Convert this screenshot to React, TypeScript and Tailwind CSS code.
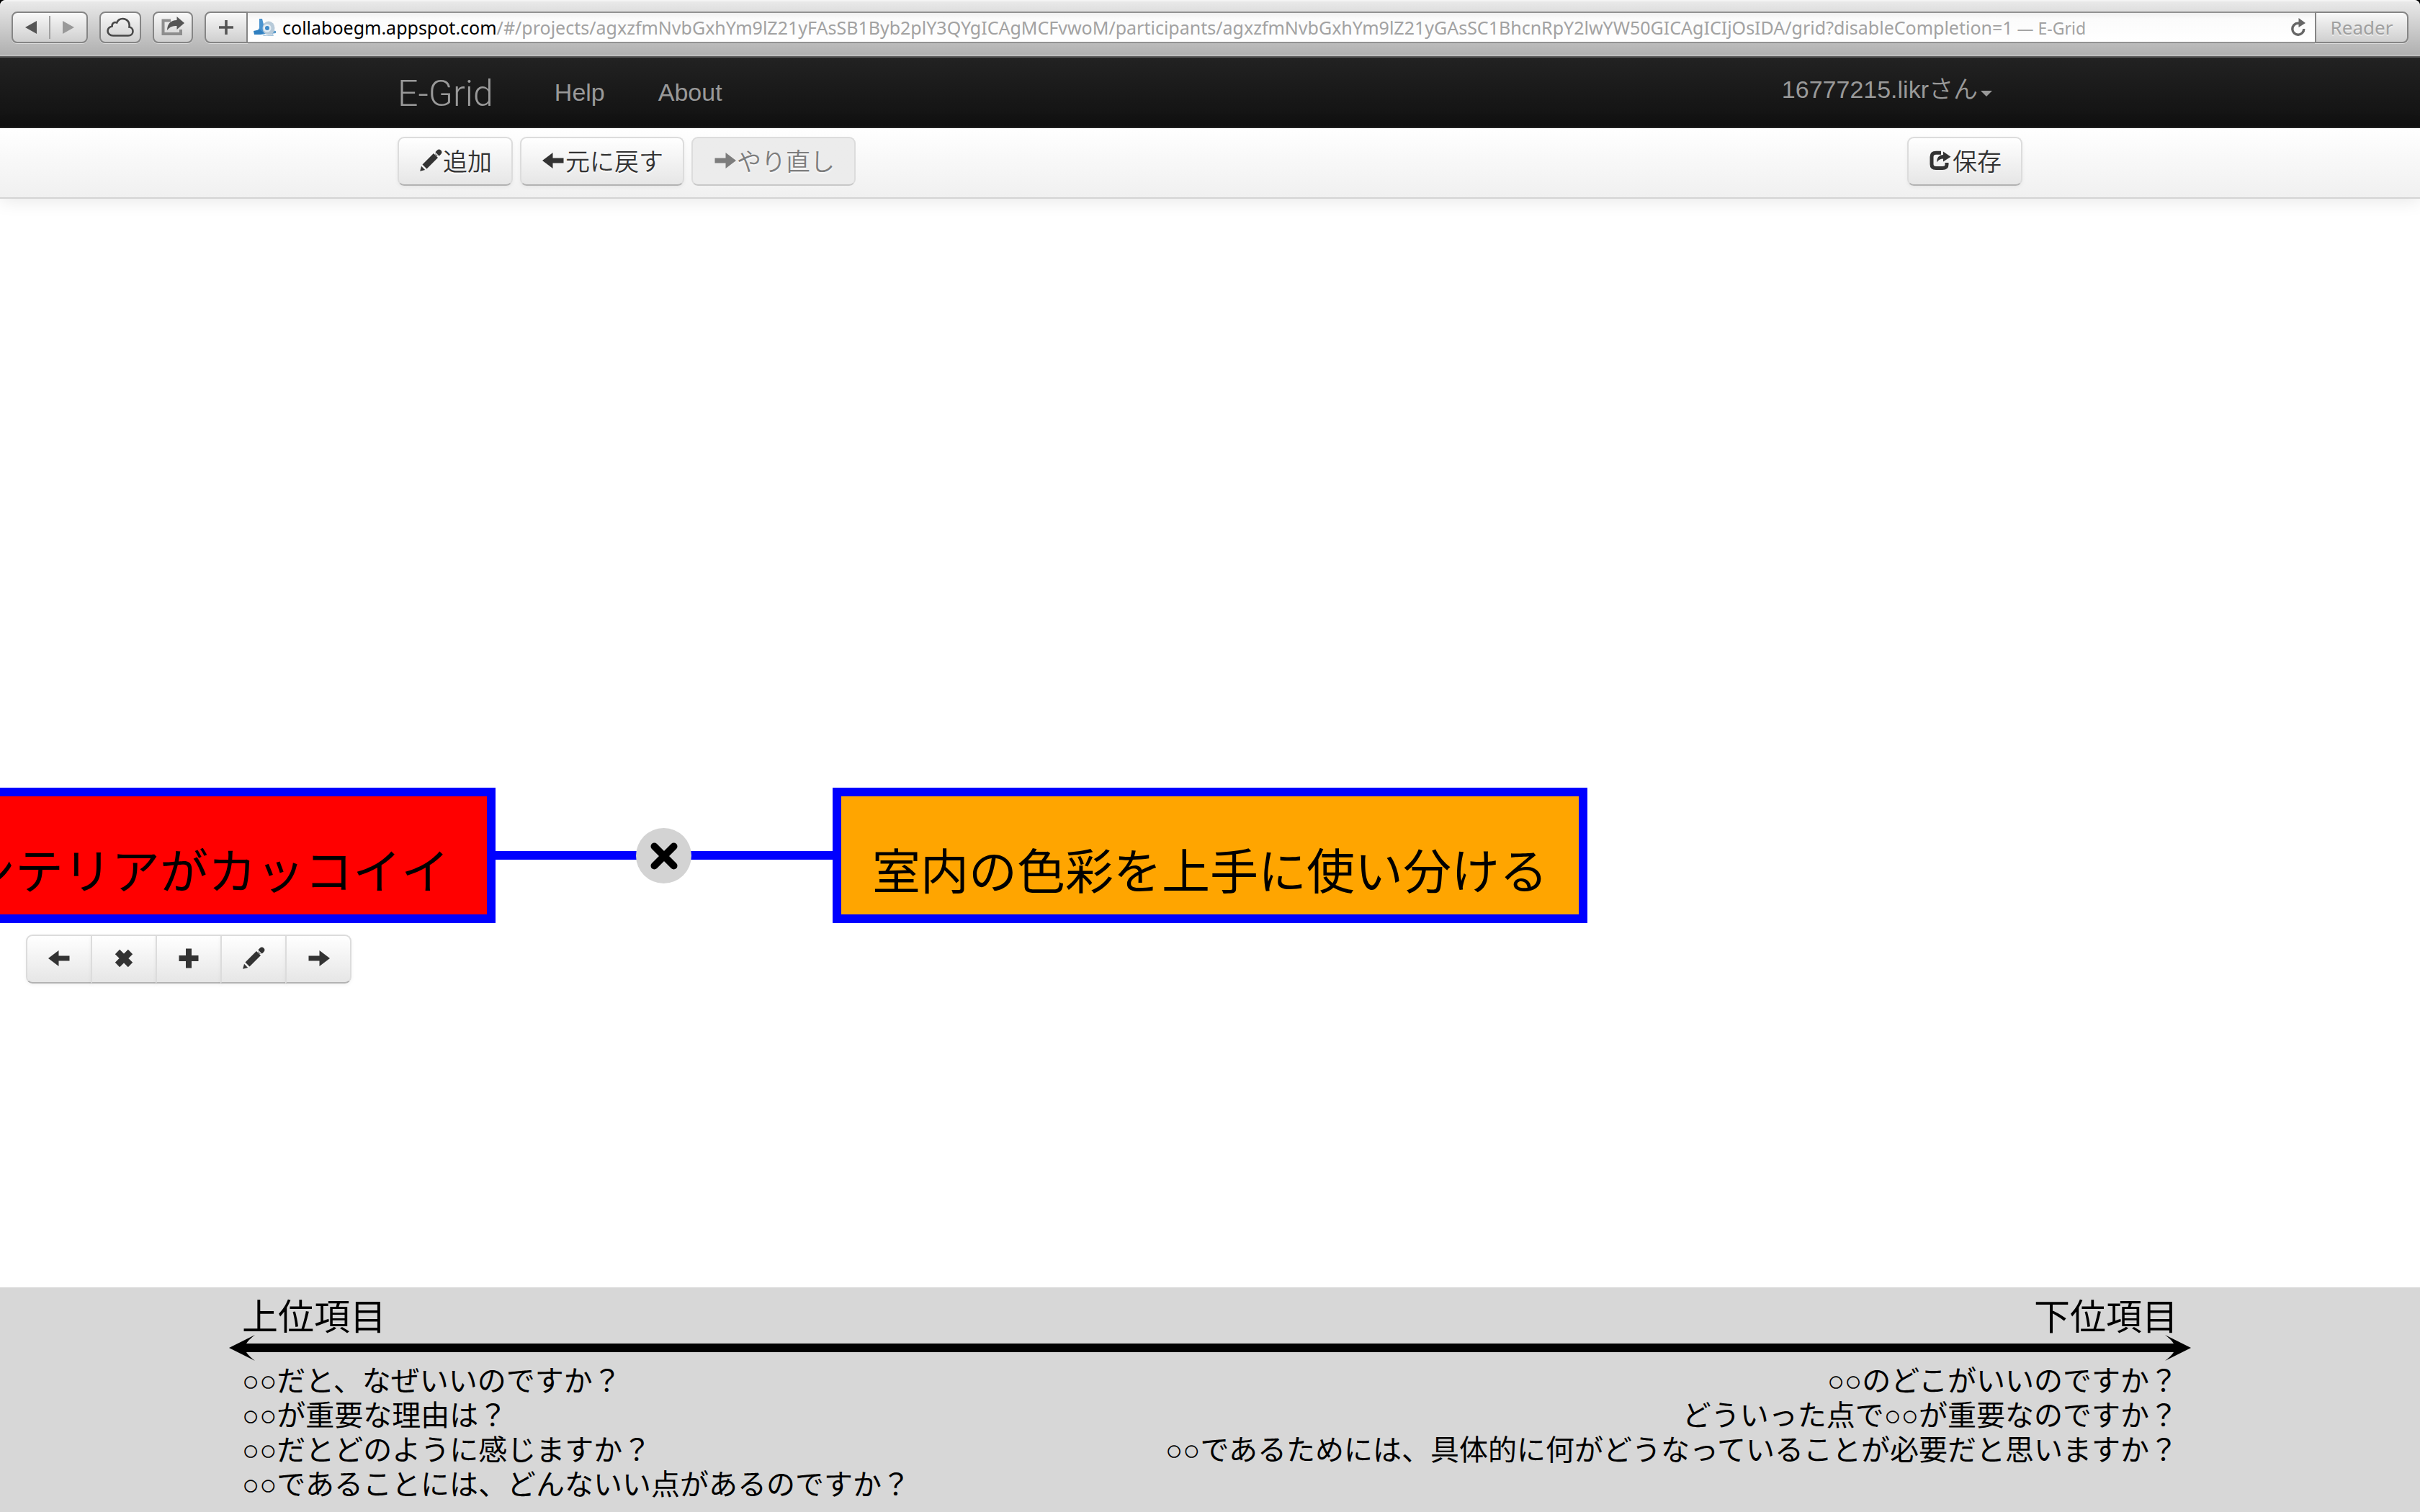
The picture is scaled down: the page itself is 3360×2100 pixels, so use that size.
import type { ReactNode } from "react";

const JP = "font-['Noto_Sans_CJK_JP',sans-serif]";
const LATIN_JP = "font-['Liberation_Sans','Noto_Sans_CJK_JP',sans-serif]";
const UI = "font-['Noto_Sans',sans-serif]";

function Icon({ children }: { children: ReactNode }) {
  return (
    <svg viewBox="0 0 34 34" className="size-[34px] shrink-0" fill="currentColor" aria-hidden="true">
      {children}
    </svg>
  );
}

const ArrowLeft = () => (
  <Icon>
    <path d="M2 17 16.500 6v7.500h15v7h-15V28z" />
  </Icon>
);

const ArrowRight = () => (
  <Icon>
    <path d="M33 17 18.500 6v7.500h-15v7h15V28z" />
  </Icon>
);

const Cross = () => (
  <Icon>
    <path d="M8 8 26 26M26 8 8 26" stroke="currentColor" strokeWidth="9" />
  </Icon>
);

const Plus = () => (
  <Icon>
    <path d="M13 3.500h8V13h9.500v8H21v9.500h-8V21H3.500v-8H13z" />
  </Icon>
);

const Pencil = () => (
  <Icon>
    <path d="M2.200 31.800 4 24.800 9.200 30z" />
    <path d="M8.500 25.500 24 10" stroke="currentColor" strokeWidth="8.500" />
    <path d="M27 7 28.500 5.500" stroke="currentColor" strokeWidth="7.500" strokeLinecap="round" />
    <path d="M22.500 5.500 28.500 11.500" stroke="#f4f4f4" strokeWidth="1.500" />
  </Icon>
);

const Share = () => (
  <Icon>
    <path
      d="M18 6.200H11Q5 6.200 5 12V22Q5 27.500 11 27.500H20Q26 27.500 26 22.500V20"
      fill="none"
      stroke="currentColor"
      strokeWidth="5"
    />
    <path d="M12 19.500Q12 9.500 21 9V4.500L31.500 11.800 21 18.500V14.500Q15.500 14.500 12 19.500z" />
  </Icon>
);

function ToolButton({ icon, children, disabled }: { icon: ReactNode; children: ReactNode; disabled?: boolean }) {
  return (
    <button
      type="button"
      disabled={disabled}
      className={`${JP} flex h-[68px] items-center rounded-[9px] border-2 border-[#dcdcdc] border-b-[#b3b3b3] bg-linear-to-b from-white to-[#e6e6e6] px-[27px] pb-0.5 text-[34px] leading-[48px] font-[350] text-[#333] shadow-[0_2px_5px_rgba(0,0,0,0.05)] [text-shadow:0_2px_2px_rgba(255,255,255,0.75)] disabled:border-b-[#c8c8c8] disabled:from-[#ececec] disabled:to-[#ececec] disabled:text-[#7d7d7d] disabled:shadow-none`}
    >
      {icon}
      {children}
    </button>
  );
}

const chrome =
  "flex h-11 items-center justify-center border-2 border-[#858585] bg-linear-to-b from-[#f8f8f8] to-[#cfcfcf] shadow-[0_1px_0_rgba(255,255,255,0.5)]";

function BrowserBar() {
  return (
    <div className="bg-black">
      <div className="flex h-20 items-start gap-4 rounded-t-[8px] border-b-2 border-[#5c5c5c] bg-linear-to-b from-[#ebebeb] to-[#aeaeae] px-4 pt-4 shadow-[inset_0_2px_0_#f4f4f4,inset_0_-2px_0_#bdbdbd]">
        <div className={`${chrome} w-[106px] rounded-[8px]`}>
          <button type="button" aria-label="Back" className="flex flex-1 justify-center">
            <svg viewBox="0 0 18 18" className="size-[18px] text-[#555]">
              <path d="M17 0v18L1 9z" fill="currentColor" />
            </svg>
          </button>
          <span className="h-8 w-0.5 bg-[#a0a0a0]" />
          <button type="button" aria-label="Forward" className="flex flex-1 justify-center">
            <svg viewBox="0 0 18 18" className="size-[18px] text-[#999]">
              <path d="M1 0v18l16-9z" fill="currentColor" />
            </svg>
          </button>
        </div>
        <button type="button" aria-label="iCloud Tabs" className={`${chrome} w-[58px] rounded-[8px]`}>
          <svg viewBox="0 0 38 28" className="h-7 w-[38px]" fill="none" stroke="#484848" strokeWidth="2.600">
            <path d="M9 25.500H30C34 25.500 36.500 22.800 36.500 19.500C36.500 16 34 13.800 31.500 13.500C32.500 6.500 28 2 22.500 2C18.500 2 15.500 4.200 14.200 7.500C10.500 6 7.200 8.500 7.600 12.500C4 13.500 1.500 16 1.500 19C1.500 22.500 4.500 25.500 9 25.500z" />
          </svg>
        </button>
        <button type="button" aria-label="Share" className={`${chrome} w-14 rounded-[8px]`}>
          <svg viewBox="0 0 34 28" className="mb-1 h-7 w-[34px]">
            <path d="M14 6.500H3.500V25H28V19" fill="none" stroke="#8e8e8e" strokeWidth="4" />
            <path d="M9 20Q9.500 6.500 22.500 6V1L33 10 22.500 19V14Q14 13 9 20z" fill="#555" />
          </svg>
        </button>
        <div className="flex min-w-0 flex-1">
          <button type="button" aria-label="Add bookmark" className={`${chrome} w-[60px] rounded-l-[8px]`}>
            <svg viewBox="0 0 20 20" className="size-5">
              <path d="M8.200 0h3.600v8.200H20v3.600h-8.200V20H8.200v-8.200H0V8.200h8.200z" fill="#555" />
            </svg>
          </button>
          <div className="flex h-11 min-w-0 flex-1 items-center border-y-2 border-[#929292] bg-linear-to-b from-[#f0f0f0] via-[#fbfbfb] via-20% to-white pr-3 pl-2">
            <svg viewBox="0 0 32 26" className="mr-2 h-[26px] w-8 shrink-0" aria-hidden="true">
              <path d="M8 1h4l2 8 4 13-9 1-5-3 4-6z" fill="#4a93cf" />
              <path d="M0 18l9-2 5 5-4 2H1z" fill="#2f7fc0" />
              <path d="M24 17l7 1v3l-7 1z" fill="#5e9ccc" />
              <ellipse cx="21" cy="14" rx="8.500" ry="9.500" fill="#b7cad9" />
              <circle cx="19" cy="14" r="5.500" fill="#e4edf4" />
              <circle cx="19" cy="14" r="3" fill="#3f8ac8" />
              <path d="M12 23q8 3 15-1l1 3H14z" fill="#a9c6dd" />
            </svg>
            <div
              role="textbox"
              aria-label="Address"
              contentEditable
              suppressContentEditableWarning
              className={`${UI} min-w-0 flex-1 truncate text-[25px] leading-9 text-[#a2a2a2]`}
            >
              <span className="text-black">collaboegm.appspot.com</span>
              /#/projects/agxzfmNvbGxhYm9lZ21yFAsSB1Byb2plY3QYgICAgMCFvwoM/participants/agxzfmNvbGxhYm9lZ21yGAsSC1BhcnRpY2lwYW50GICAgICIjOsIDA/grid?disableCompletion=1
              <span className="text-[23px]"> — E-Grid</span>
            </div>
            <button type="button" aria-label="Reload">
              <svg viewBox="0 0 22 26" className="h-[26px] w-[22px]" aria-hidden="true">
                <path d="M13 7.200H10.500A8 8 0 1 0 18.800 15" fill="none" stroke="#666" strokeWidth="3.400" />
                <path d="M11.500 0 21 7 11.500 13z" fill="#666" />
              </svg>
            </button>
          </div>
          <button
            type="button"
            className={`${chrome} ${UI} w-[130px] rounded-r-[8px] text-[26px] leading-9 text-[#a0a0a0] [text-shadow:0_2px_0_rgba(255,255,255,0.5)]`}
          >
            Reader
          </button>
        </div>
      </div>
    </div>
  );
}

function NavBar() {
  return (
    <nav
      className={`${LATIN_JP} h-[98px] border-b-2 border-[#252525] bg-linear-to-b from-[#222] to-[#111] text-[34px] leading-[48px] text-[#999]`}
    >
      <div className="mx-auto flex h-full max-w-[2256px] items-center">
        <a href="#/" className="mr-12 pt-1 font-[Roboto,sans-serif] text-[50px] leading-[60px] font-light">
          E-Grid
        </a>
        <a href="#/help" className="px-[37px]">
          Help
        </a>
        <a href="#/about" className="px-[37px]">
          About
        </a>
        <button type="button" className="mr-[42px] mb-2 ml-auto flex items-center gap-1">
          <span className="font-[350]">16777215.likrさん</span>
          <svg viewBox="0 0 16 8" className="mt-3 h-2 w-4" aria-hidden="true">
            <path d="M0 0h16L8 8z" fill="currentColor" />
          </svg>
        </button>
      </div>
    </nav>
  );
}

function ToolBar() {
  return (
    <div className="relative z-10 h-[98px] border-b-2 border-[#d4d4d4] bg-linear-to-b from-white to-[#f0f0f0] shadow-[0_2px_24px_rgba(0,0,0,0.1)]">
      <div className="mx-auto flex max-w-[2256px] gap-2.5 pt-3">
        <ToolButton icon={<Pencil />}>追加</ToolButton>
        <ToolButton icon={<ArrowLeft />}>元に戻す</ToolButton>
        <ToolButton icon={<ArrowRight />} disabled>
          やり直し
        </ToolButton>
        <div className="ml-auto">
          <ToolButton icon={<Share />}>保存</ToolButton>
        </div>
      </div>
    </div>
  );
}

const nodeActions = [
  { label: "上位項目を追加", icon: <ArrowLeft /> },
  { label: "削除", icon: <Cross /> },
  { label: "連結", icon: <Plus /> },
  { label: "編集", icon: <Pencil /> },
  { label: "下位項目を追加", icon: <ArrowRight /> },
];

const nodeBox =
  "absolute top-[818px] h-[188px] border-[12px] border-[#00f] pt-9 text-[67px] leading-[128px] whitespace-nowrap text-black";

function Canvas() {
  return (
    <main className={`${JP} relative min-h-[1512px] flex-1 overflow-hidden bg-white`}>
      <div className="absolute top-[906px] left-[688px] h-3 w-[468px] bg-[#00f]" />
      <div className={`${nodeBox} -left-4 flex w-[704px] justify-end bg-[#f00] pr-[52px]`}>インテリアがカッコイイ</div>
      <div className={`${nodeBox} left-[1156px] bg-[#ffa500] px-[43px]`}>室内の色彩を上手に使い分ける</div>
      <button
        type="button"
        aria-label="切断"
        className="absolute top-[874px] left-[883px] flex size-[77px] items-center justify-center rounded-full bg-[#d3d3d3]"
      >
        <svg viewBox="0 0 40 40" className="size-10" stroke="#000" strokeWidth="10" strokeLinecap="round">
          <path d="M6.500 6.500 33.500 33.500M33.500 6.500 6.500 33.500" />
        </svg>
      </button>
      <div className="absolute top-[1022px] left-9 flex">
        {nodeActions.map((action) => (
          <button
            key={action.label}
            type="button"
            aria-label={action.label}
            className="-mr-0.5 flex h-[68px] w-[92px] items-center justify-center border-2 border-[#dcdcdc] border-b-[#b3b3b3] bg-linear-to-b from-white to-[#e6e6e6] pb-0.5 text-[#333] shadow-[0_2px_5px_rgba(0,0,0,0.05)] first:rounded-l-[9px] last:rounded-r-[9px]"
          >
            {action.icon}
          </button>
        ))}
      </div>
    </main>
  );
}

function ArrowHead({ flip }: { flip?: boolean }) {
  return (
    <svg viewBox="0 0 36 36" className="h-9 w-9 shrink-0" aria-hidden="true">
      <path
        d={flip ? "M36 18 0 0Q9 7 12 12H0V24H12Q9 29 0 36z" : "M0 18 36 0Q27 7 24 12H36V24H24Q27 29 36 36z"}
      />
    </svg>
  );
}

const upperQuestions = [
  "○○だと、なぜいいのですか？",
  "○○が重要な理由は？",
  "○○だとどのように感じますか？",
  "○○であることには、どんないい点があるのですか？",
];

const lowerQuestions = [
  "○○のどこがいいのですか？",
  "どういった点で○○が重要なのですか？",
  "○○であるためには、具体的に何がどうなっていることが必要だと思いますか？",
];

function Footer() {
  return (
    <footer className="bg-[#d7d7d7] px-[10%] pt-2 pb-3.5 text-black">
      <div className={`${JP} flex justify-between text-[50px] leading-[58px]`}>
        <h2>上位項目</h2>
        <h2>下位項目</h2>
      </div>
      <div className="-mx-[18px] flex items-center">
        <ArrowHead />
        <div className="h-3 flex-1 bg-black" />
        <ArrowHead flip />
      </div>
      <div className={`${LATIN_JP} flex justify-between pt-1 text-[40px] leading-[48px]`}>
        <ul>
          {upperQuestions.map((q) => (
            <li key={q}>{q}</li>
          ))}
        </ul>
        <ul className="text-right">
          {lowerQuestions.map((q) => (
            <li key={q}>{q}</li>
          ))}
        </ul>
      </div>
    </footer>
  );
}

export default function App() {
  return (
    <div className="flex min-h-screen flex-col bg-white">
      <BrowserBar />
      <NavBar />
      <ToolBar />
      <Canvas />
      <Footer />
    </div>
  );
}
